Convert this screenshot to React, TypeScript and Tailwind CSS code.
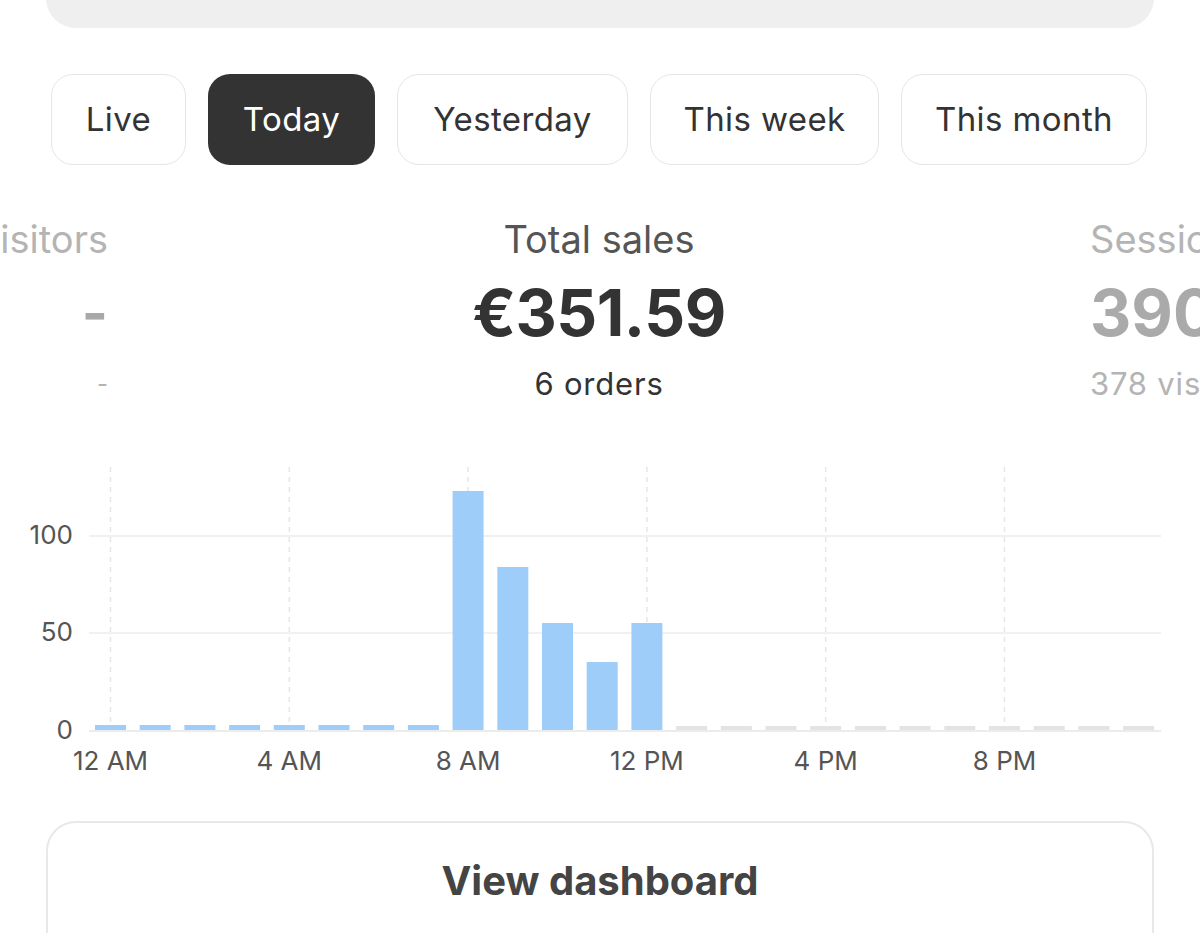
import React from "react";

const tabs = [
  { label: "Live", w: "w-[135px]" },
  { label: "Today", w: "w-[167px]", active: true },
  { label: "Yesterday", w: "w-[231px]" },
  { label: "This week", w: "w-[229px]" },
  { label: "This month", w: "w-[246px]" },
];

// bar heights in px for each hour, null = empty slot (grey)
const hours: (number | null)[] = [
  5, 5, 5, 5, 5, 5, 5, 5, 239, 163, 107, 68, 107,
  null, null, null, null, null, null, null, null, null, null, null,
];

const ticks = [
  { h: 0, label: "12 AM" },
  { h: 4, label: "4 AM" },
  { h: 8, label: "8 AM" },
  { h: 12, label: "12 PM" },
  { h: 16, label: "4 PM" },
  { h: 20, label: "8 PM" },
];

function SalesChart() {
  const base = 271; // baseline y inside svg (page y 731)
  const x0 = 110.5;
  const step = 44.7;
  return (
    <svg width="1200" height="320" viewBox="0 0 1200 320" className="block">
      {/* vertical dashed guides */}
      {ticks.map((t) => (
        <line
          key={t.label}
          x1={x0 + t.h * step}
          x2={x0 + t.h * step}
          y1={8}
          y2={base}
          stroke="#e6e6e6"
          strokeWidth="1.5"
          strokeDasharray="5 5"
        />
      ))}
      {/* horizontal grid */}
      <line x1="89" x2="1161" y1={77} y2={77} stroke="#ececec" strokeWidth="1.5" />
      <line x1="89" x2="1161" y1={174} y2={174} stroke="#ececec" strokeWidth="1.5" />
      <line x1="89" x2="1161" y1={base + 1} y2={base + 1} stroke="#e6e6e6" strokeWidth="1.5" />

      {hours.map((v, i) => {
        const cx = x0 + i * step;
        if (v === null) {
          return <rect key={i} x={cx - 15.5} y={base - 4} width="31" height="4" fill="#e3e3e3" />;
        }
        return <rect key={i} x={cx - 15.5} y={base - v} width="31" height={v} fill="#9fcdf9" />;
      })}

      {/* y axis labels */}
      <g fill="#555" fontSize="26" fontFamily="Inter, 'Liberation Sans', sans-serif" textAnchor="end">
        <text x="73" y={85}>100</text>
        <text x="73" y={182}>50</text>
        <text x="73" y={280}>0</text>
      </g>
      {/* x axis labels */}
      <g fill="#555" fontSize="26" fontFamily="Inter, 'Liberation Sans', sans-serif" textAnchor="middle">
        {ticks.map((t) => (
          <text key={t.label} x={x0 + t.h * step} y={311}>
            {t.label}
          </text>
        ))}
      </g>
    </svg>
  );
}

export default function App() {
  return (
    <div className="w-[1200px] h-[933px] overflow-hidden bg-white font-['Inter','Liberation_Sans',sans-serif]">
      {/* search field peeking from above */}
      <div className="mx-[46px] -mt-[60px] h-[88px] rounded-[30px] bg-[#efefef]" />

      {/* date range tabs */}
      <div className="mt-[46px] ml-[51px] flex gap-[22px]">
        {tabs.map((t) => (
          <div
            key={t.label}
            className={`${t.w} h-[91px] flex items-center justify-center rounded-[22px] text-[33px] tracking-[0.4px] ${
              t.active ? "bg-[#333333] text-white" : "border border-[#e6e6e6] text-[#333333]"
            }`}
          >
            {t.label}
          </div>
        ))}
      </div>

      {/* metrics carousel */}
      <div className="mt-[52px] flex whitespace-nowrap">
        <div className="w-[108px] flex flex-col items-end text-[#b4b4b4]">
          <div className="h-[44px] text-[38px] leading-[44px]">Visitors</div>
          <div className="mt-[26px] h-[52px] text-[56px] leading-[52px] font-bold text-[#a8a8a8]">-</div>
          <div className="mt-[27px] text-[24px] leading-[36px]">-</div>
        </div>
        <div className="flex-1 flex flex-col items-center">
          <div className="h-[44px] text-[38px] leading-[44px] text-[#555555]">Total sales</div>
          <div className="mt-[26px] h-[52px] text-[64px] leading-[52px] font-bold text-[#333333] tracking-[-0.5px]">€351.59</div>
          <div className="mt-[27px] text-[31px] leading-[36px] text-[#333333] tracking-[0.8px]">6 orders</div>
        </div>
        <div className="w-[110px] flex flex-col items-start text-[#b4b4b4]">
          <div className="h-[44px] text-[38px] leading-[44px]">Sessions</div>
          <div className="mt-[26px] h-[52px] text-[64px] leading-[52px] font-bold text-[#aaaaaa]">390</div>
          <div className="mt-[27px] text-[31px] leading-[36px] tracking-[0.8px]">378 visitors</div>
        </div>
      </div>

      {/* chart */}
      <div className="mt-[57px]">
        <SalesChart />
      </div>

      {/* footer button */}
      <div className="mx-[46px] mt-[42px] h-[150px] pt-[34px] flex justify-center rounded-[30px] border-2 border-[#e8e8e8] text-[40px] leading-[48px] font-bold text-[#444444]">
        View dashboard
      </div>
    </div>
  );
}
